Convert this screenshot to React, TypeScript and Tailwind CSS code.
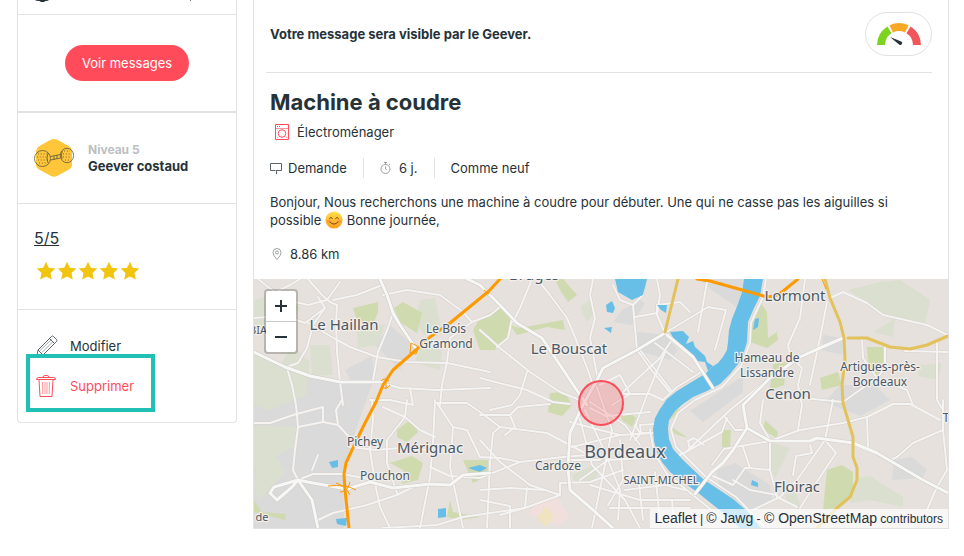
import type { ReactNode } from "react";

const STAR = "M10 .8l2.8 6 6.5.8-4.8 4.5 1.3 6.5L10 15.4l-5.8 3.2 1.3-6.5L.7 7.6l6.5-.8z";

function LevelBadge() {
  return (
    <svg viewBox="0 0 40 40" className="size-10 shrink-0" fill="none" aria-hidden="true">
      <path
        d="M17 1.6q3-1.4 6 0l12 6.6q3 1.8 3 5v13.400q0 3.400-3 5l-12 6.400q-3 1.600-6 0l-12-6.400q-3-1.600-3-5V13.200q0-3.200 3-5z"
        fill="#ffc639"
      />
      <g stroke="#5c563c" strokeWidth=".8">
        <ellipse cx="8.500" cy="20.500" rx="8" ry="8" />
        <ellipse cx="33" cy="17.500" rx="6.600" ry="7.200" />
        <path d="M16.500 18.500l10-2M16.500 22l10-2M20 18v4M23 17v4M14 15q-2 5 0 10M28 13q-1 4 0 8" />
        <path
          d="M4 16h9M3 19h11M4 22h10M5 25h8M30 13h6M29 16h8M29 19h8M31 22h5"
          strokeDasharray="1 1.800"
        />
      </g>
    </svg>
  );
}

function Gauge() {
  return (
    <svg viewBox="0 0 44 23" className="h-[23px] w-11" role="img" aria-label="État">
      <g fill="none" strokeWidth="8">
        <path d="M4 22A18 18 0 0 1 12.500 6.800" stroke="#7ed321" />
        <path d="M14.200 5.900A18 18 0 0 1 29.800 5.900" stroke="#f9a825" />
        <path d="M31.500 6.800A18 18 0 0 1 40 22" stroke="#f0565b" />
      </g>
      <path d="M13 14l11.200 4.500a1.800 1.800 0 0 1-1.800 3.200z" fill="#263238" />
    </svg>
  );
}

function PencilIcon() {
  return (
    <svg viewBox="0 0 22 22" className="size-[22px]" fill="none" stroke="#4a5357" aria-hidden="true">
      <path d="M1 21l1-6L15.500 1.500q1-1 2 0l3 3q1 1 0 2L7 20zM13.500 3.500l5 5M2 15l5 5" strokeWidth=".9" />
      <path d="M4 15.500L15.500 4.500M6 17.500L17 6.500" strokeWidth=".5" />
    </svg>
  );
}

function TrashIcon() {
  return (
    <svg viewBox="0 0 20 22" className="h-[22px] w-5" fill="none" stroke="#ff4d5b" aria-hidden="true">
      <path d="M.5 4.500q0-2 2-2h15q2 0 2 2zM7 2.500q0-2 2-2h2q2 0 2 2M3 4.500l1 17h12l1-17" />
      <path d="M6.500 7l.3 12M9 7v12M11 7v12M13.500 7l-.3 12" strokeWidth=".6" />
    </svg>
  );
}

function WasherIcon() {
  return (
    <svg viewBox="0 0 14 16" className="h-4 w-3.5" fill="none" stroke="#ff4d5b" aria-hidden="true">
      <path d="M.5.5h13v15H.5zM2 2.500h1M4 2.500h1" />
      <path d="M.5 4.500h13M11 13.500h1M2 13.500h1" strokeWidth=".6" />
      <circle cx="7" cy="9.500" r="3.800" />
    </svg>
  );
}

function SignIcon() {
  return (
    <svg viewBox="0 0 12 11" className="h-[11px] w-3" fill="none" stroke="#5b6468" aria-hidden="true">
      <path d="M5.500 7.500h-5v-7h11v7h-5M6.500 7v4" />
    </svg>
  );
}

function TimerIcon() {
  return (
    <svg viewBox="0 0 11 12" className="h-3 w-[11px]" fill="none" stroke="#838a8d" strokeWidth=".8" aria-hidden="true">
      <circle cx="5.500" cy="7" r="4.500" />
      <path d="M4 .5h3M5.500.5v2M9 2l1 1M5.500 4.500V7l1.500 1" />
    </svg>
  );
}

function PinIcon() {
  return (
    <svg viewBox="0 0 10 12" className="h-3 w-2.5" fill="none" stroke="#838a8d" strokeWidth=".8" aria-hidden="true">
      <path d="M5 11.500Q1 7.500 1 4.500a4 4 0 0 1 8 0Q9 7.500 5 11.500z" />
      <circle cx="5" cy="4.500" r="1.500" />
    </svg>
  );
}

function Smiley() {
  return (
    <svg viewBox="0 0 18 18" className="inline-block size-[18px] align-[-4px]" role="img" aria-label="sourire">
      <defs>
        <linearGradient id="face" x2="0" y2="1">
          <stop offset="0" stopColor="#ffe04d" />
          <stop offset="1" stopColor="#f99b1c" />
        </linearGradient>
      </defs>
      <circle cx="9" cy="9" r="8.600" fill="url(#face)" />
      <ellipse cx="3.800" cy="10.500" rx="2.200" ry="1.800" fill="#fb7b3b" opacity=".5" />
      <ellipse cx="14.200" cy="10.500" rx="2.200" ry="1.800" fill="#fb7b3b" opacity=".5" />
      <path
        d="M4.500 7.500Q6 5 7.500 7.500M10.500 7.500Q12 5 13.500 7.500M5 11q4 4.500 8 0"
        fill="none"
        stroke="#7a4310"
        strokeLinecap="round"
      />
    </svg>
  );
}

const urban = [
  "254,390 287,368 340,383 372,384 362,412 352,442 343,470 344,528 254,528",
  "390,325 415,347 400,370 375,345",
  "345,370 372,356 375,380 350,380",
  "640,300 645,303 632,325 613,322 622,310",
  "638,332 665,335 678,350 670,360 635,350",
  "690,411 743,376 743,392 703,422",
  "700,279 744,279 738,308 712,290",
  "823,335 843,338 842,355 822,350",
  "840,385 875,385 890,400 860,416 825,402",
  "894,460 912,457 927,470 922,478 892,480",
  "716,470 735,463 770,485 772,500 750,512 720,488",
];

const paleGreens = [
  "254,300 284,292 300,308 290,325 254,330",
  "356,325 385,325 378,345 358,348",
  "420,300 435,298 440,325 424,335 415,322",
  "420,345 442,350 440,370 415,363",
  "254,350 280,366 292,345 310,362 306,395 270,410 254,405",
  "310,345 330,345 333,375 312,376",
  "254,425 296,427 296,445 254,470",
  "258,455 270,447 285,472 260,500 254,490",
  "580,307 592,298 595,312 587,322",
  "572,475 595,464 598,475 590,482 574,482",
  "848,290 880,282 900,280 930,300 925,324 885,314",
  "885,325 895,317 893,337 873,332",
  "920,365 942,363 938,380 918,376",
  "857,478 870,476 903,497 903,507 870,500 850,503",
  "771,442 790,448 775,478 770,465",
  "785,495 795,490 802,510 788,505",
];

const greens = [
  "353,308 378,302 378,312 373,325 358,323",
  "394,308 403,302 422,313 417,333 400,322",
  "473,330 480,318 500,307 510,315 510,335 495,350 480,350",
  "510,325 520,328 563,320 565,330 547,327 517,335",
  "555,279 563,279 577,295 568,302 560,290",
  "550,393 565,392 572,405 562,416 548,412",
  "621,416 630,413 636,418 632,427 622,420",
  "397,430 410,420 418,432 407,442 397,437",
  "390,463 412,456 423,463 418,480 402,484 403,470",
  "463,460 488,460 488,475 473,483",
  "450,500 453,512 480,517 460,520 447,517",
  "760,302 767,312 768,338 777,332 778,340 767,348 750,342 753,315",
  "773,364 787,362 784,385 770,390",
  "820,378 838,372 842,385 822,390",
  "867,347 883,347 883,372 875,377 868,362",
  "827,470 842,465 853,472 853,497 837,508 823,510",
  "765,420 778,432 777,438 763,430",
  "722,430 731,430 730,447 722,447",
  "670,426 688,438 675,434",
  "668,422 675,410 683,409 672,418",
  "254,500 262,512 286,514 285,520 254,512",
];

const water = [
  "744,279 763,279 760,296 754,308 748,322 747,342 743,355 738,364 730,374 720,384 707,391 693,397 683,404 675,411 669,420 668,429 669,439 673,449 682,459 703,479 718,489 733,499 747,511 761,528 740,528 727,516 697,492 683,482 670,472 662,462 657,452 654,441 653,429 655,418 660,409 667,399 677,391 690,383 705,374 712,367 718,363 723,357 727,350 728,342 729,330 732,319 738,304 742,292",
  "670,332 683,331 689,337 686,344 693,341 695,347 705,356 707,362 713,366 708,371 705,362 697,361 687,352 683,346 675,341",
  "615,279 618,292 632,300 643,295 647,279",
  "606,305 612,301 615,308 613,313 607,312",
  "604,328 612,327 611,333",
  "657,305 667,305 666,313 661,310",
  "329,462 338,460 338,467 332,468",
  "336,519 347,518 346,526 337,524",
  "438,509 446,508 446,517 438,518",
  "468,468 480,465 487,468 480,472",
  "753,330 755,319 759,318 758,327",
  "751,485 752,480 758,483 758,487",
];

const minorRoads = [
  "258,279 268,287 287,300 308,305 327,300 340,282",
  "308,279 322,295 330,302 337,305 336,322 337,352 340,382 343,405",
  "254,318 285,316 305,323 325,308",
  "270,295 290,285 300,279",
  "333,300 357,295 382,285",
  "308,323 337,340 350,347 377,357 407,362 447,363 490,372",
  "318,297 325,308 313,325 307,348 298,363 287,367",
  "393,313 388,328 378,352 373,380",
  "383,295 407,290 440,295 463,312 472,322 490,315 500,307",
  "472,322 450,338 447,362 442,385 440,405",
  "382,383 400,388 437,390 490,388",
  "410,388 413,405 390,400 370,400",
  "287,368 292,385 296,405 298,427 295,450 293,470 298,480",
  "254,423 270,423 293,415 323,407 323,422 298,427",
  "323,422 338,425 350,438",
  "338,425 336,410 342,400",
  "312,470 318,455",
  "298,480 313,474 343,474 373,480",
  "318,520 333,513 367,505 397,495 417,485",
  "372,400 373,420 370,450 375,483 380,507 390,528",
  "383,407 405,417 420,430 435,437",
  "407,400 405,417 387,440 387,463 397,493",
  "350,447 375,450 400,448 430,450",
  "435,400 433,443 430,477 420,528",
  "435,403 467,403 480,412 500,427 493,433 490,463 487,528",
  "437,403 453,427 467,430 480,457 500,458 520,462",
  "453,427 450,467 463,528",
  "430,467 450,476 480,478 520,462 563,457 600,454",
  "383,528 437,525 463,517 490,513 525,508 560,495 560,483 590,482 623,470",
  "480,330 500,348 530,372 560,392 580,400",
  "480,378 527,390 553,402 570,404",
  "527,372 520,395 512,405 490,410",
  "512,318 508,338 497,347",
  "532,279 520,308 513,322",
  "537,279 550,295 567,318 577,342 587,368 593,385",
  "593,279 590,295 595,318 590,338 597,375",
  "613,285 620,300 633,305 643,295 645,279",
  "633,305 635,328 637,350 653,372 670,392",
  "657,279 660,295 657,315 665,333",
  "635,317 657,313 657,305 680,302 690,312",
  "665,333 708,307 726,310 715,350",
  "707,282 698,332",
  "500,427 547,433 585,453",
  "480,415 510,415 518,407 550,404",
  "510,415 515,427 505,435",
  "480,440 500,462 530,485 545,490",
  "480,490 510,488 545,490 560,495",
  "527,488 525,508 500,515",
  "480,500 510,506 510,528",
  "623,392 660,358 673,338",
  "630,440 647,395 665,352",
  "655,343 693,372",
  "640,350 671,390",
  "623,394 650,394 663,400",
  "600,385 620,375 630,394 612,405",
  "590,402 625,425 640,445",
  "595,382 612,430 606,460 592,528",
  "590,408 606,416 650,412",
  "568,448 620,435 655,433",
  "635,425 640,433 653,433",
  "635,440 641,433 640,425 655,424",
  "585,410 604,450 620,490 618,520",
  "570,422 600,430 620,435",
  "578,412 592,465 625,500 640,528",
  "620,440 623,480 608,505",
  "580,480 608,460 650,458",
  "590,485 640,500 690,500",
  "625,490 665,485 685,490",
  "638,475 643,520",
  "655,472 660,520",
  "610,508 690,508",
  "672,500 674,528",
  "568,460 600,460",
  "688,450 730,410 770,378",
  "690,450 688,441 694,438 704,445",
  "680,455 700,444 722,432 727,418",
  "725,417 735,430 747,430",
  "663,400 677,387 703,371",
  "712,465 724,449 770,441",
  "743,447 750,468 770,470",
  "713,476 733,485 745,468 750,468",
  "733,480 750,490 777,495",
  "830,298 843,292 867,303 883,315 927,325 948,335",
  "805,279 800,318 788,345 790,355 802,368 798,385 802,405 798,430",
  "827,302 820,338 810,385",
  "763,400 760,423 770,440 770,470 777,497 797,507",
  "833,400 825,440 797,480 780,497 753,510",
  "825,440 836,453 818,480 800,508",
  "810,445 812,453 796,456 793,475",
  "770,441 800,430 843,423 867,417 893,404 910,404 940,420",
  "867,417 868,447",
  "943,400 943,430 913,443 897,457 890,460",
  "943,430 947,470 937,487 927,510",
  "862,338 863,358 877,378 907,390 913,405",
  "885,347 885,368 877,378 857,392 843,402 803,398",
  "937,340 937,400 943,410",
  "905,351 948,352",
];

// quays along both banks of the Garonne
const quays = [
  "766,279 763,297 751,323 750,343 741,366 722,387 695,400 678,413 671,429 676,447 706,477 736,497 764,526",
  "650,429 654,453 667,474 694,496 724,520",
];

const majorRoads = [
  "380,279 387,295 393,313 400,325 415,347",
  "254,352 285,367 310,376 340,382 382,382",
  "467,279 480,285 500,305 517,323 542,338 560,365 580,395 587,405",
  "665,333 637,350 603,368 597,380 583,405 570,433 568,467 570,490 593,510 613,528",
  "667,335 693,357 713,388",
  "298,480 274,487 270,493 277,500 292,487 298,480 312,500 318,528",
  "298,480 313,483 347,489 370,482 393,488 430,484 450,485 463,475 490,473",
  "843,338 820,348 800,357 770,378 743,405 747,428 733,450 723,463 712,472 695,494",
  "747,428 770,441 810,441 817,438 853,443 877,453 923,480 948,493",
];

const motorways = [
  "500,279 489,291 450,323 430,337 416,350 393,370 383,385 376,402 363,427 352,450 346,463 344,474 345,490 349,528",
  "697,279 710,281 767,297 775,296 782,292 798,279",
];

const trunks = [
  "678,279 665,332",
  "825,279 830,298 840,322 844,338 845,360 842,385 843,403 853,437 853,457 857,468 857,480 850,497 837,508 817,528",
  "848,338 867,338 890,347 910,349 927,345 948,336",
];

const places = [
  { name: "Bruges", x: 534, y: 280, size: 15 },
  { name: "Le Haillan", x: 344, y: 330, size: 15 },
  { name: "Le Bois", x: 446, y: 333, size: 12 },
  { name: "Gramond", x: 446, y: 348, size: 12 },
  { name: "BIA", x: 258, y: 334, size: 11 },
  { name: "Le Bouscat", x: 569, y: 354, size: 15 },
  { name: "Mérignac", x: 430, y: 453, size: 15 },
  { name: "Pichey", x: 365, y: 446, size: 12 },
  { name: "Pouchon", x: 385, y: 480, size: 12 },
  { name: "Cardoze", x: 558, y: 470, size: 12 },
  { name: "Bordeaux", x: 625, y: 458, size: 18 },
  { name: "SAINT-MICHEL", x: 661, y: 484, size: 11 },
  { name: "Lormont", x: 795, y: 301, size: 15 },
  { name: "Hameau de", x: 767, y: 362, size: 12 },
  { name: "Lissandre", x: 767, y: 377, size: 12 },
  { name: "Cenon", x: 788, y: 399, size: 15 },
  { name: "Artigues-près-", x: 880, y: 371, size: 12 },
  { name: "Bordeaux", x: 880, y: 386, size: 12 },
  { name: "Floirac", x: 797, y: 492, size: 15 },
  { name: "T", x: 946, y: 422, size: 12 },
  { name: "de", x: 262, y: 521, size: 11 },
];

function Lines({ lines, stroke, width }: { lines: string[]; stroke: string; width: number }) {
  return (
    <g fill="none" stroke={stroke} strokeWidth={width} strokeLinejoin="round" strokeLinecap="round">
      {lines.map((points) => (
        <polyline key={points} points={points} />
      ))}
    </g>
  );
}

function Areas({ areas, fill }: { areas: string[]; fill: string }) {
  return (
    <g fill={fill}>
      {areas.map((points) => (
        <polygon key={points} points={points} />
      ))}
    </g>
  );
}

function CityMap() {
  return (
    <svg
      viewBox="254 279 694 249"
      preserveAspectRatio="xMidYMid slice"
      className="block h-full w-full"
      role="img"
      aria-label="Carte de Bordeaux"
    >
      <rect x="254" y="279" width="694" height="249" fill="#e6e1dc" />
      <Areas areas={urban} fill="#dadada" />
      <Areas areas={paleGreens} fill="#dbdfcf" />
      <Areas areas={greens} fill="#cfdaae" />
      <polygon points="528,513 540,500 557,497 570,517 560,525 543,520" fill="#f0dfdc" />
      <polygon points="537,517 547,506 554,516 546,527" fill="#f0e4c0" />
      <Lines lines={minorRoads} stroke="#d6d1cd" width={3} />
      <Lines lines={quays} stroke="#d6d1cd" width={3} />
      <Lines lines={minorRoads} stroke="#f5f4f3" width={2} />
      <Lines lines={quays} stroke="#f5f4f3" width={2} />
      <Areas areas={water} fill="#67bee7" />
      <Lines lines={majorRoads} stroke="#cfcbc7" width={4} />
      <Lines lines={majorRoads} stroke="#f7f7f6" width={3} />
      <Lines lines={trunks} stroke="#e3c25c" width={3} />
      <Lines lines={motorways} stroke="#ff9900" width={3} />
      <g fill="none" stroke="#ff9900">
        <path d="M411 343l8 4-3 7-6-1zM381 381q3-4 8 0M382 387q5 3 8-2M386 378v11M328 486q18-2 28 4M336 483q10 3 14 12M340 492q8 0 10-10M822 279l4 10M484 290l5 4" />
      </g>
      <g
        fill="#4a5864"
        stroke="#f1eeeb"
        strokeWidth="2.500"
        strokeLinejoin="round"
        paintOrder="stroke"
        textAnchor="middle"
        className="font-['Noto_Sans','Open_Sans',sans-serif]"
      >
        {places.map((place) => (
          <text key={`${place.name}-${place.y}`} x={place.x} y={place.y} fontSize={place.size}>
            {place.name}
          </text>
        ))}
      </g>
      <circle cx="601" cy="403" r="22" fill="#ff4d5b" fillOpacity=".22" stroke="#ff4d5b" strokeWidth="2" />
    </svg>
  );
}

function SideSection({ children, className }: { children: ReactNode; className: string }) {
  return <section className={`border-t border-[#e2e2e2] px-4 ${className}`}>{children}</section>;
}

function Sidebar() {
  return (
    <aside className="w-[220px] shrink-0 rounded-b border-x border-b border-[#e2e2e2]">
      <div className="flex h-3.5 items-start justify-between pr-11 pl-4">
        <svg viewBox="0 0 16 3" className="h-[3px] w-4" aria-hidden="true">
          <path d="M1 0h14q-1 1-3 1H5Q2 1 1 0zM4 0h9l-3 2H7z" fill="#263238" />
        </svg>
        <svg viewBox="0 0 3 2" className="h-0.5 w-[3px]" aria-hidden="true">
          <path d="M1 0h1v1H1z" fill="#737b7f" />
        </svg>
      </div>
      <SideSection className="flex justify-center py-[30px]">
        <button type="button" className="h-9 rounded-full bg-[#ff4b5a] px-[17px] text-white">
          Voir messages
        </button>
      </SideSection>
      <SideSection className="flex items-center gap-3.5 border-t-2 py-[25px]">
        <LevelBadge />
        <div className="font-bold">
          <p className="text-xs leading-4 text-[#bbbfc1]">Niveau 5</p>
          <p className="leading-4">Geever costaud</p>
        </div>
      </SideSection>
      <SideSection className="pt-6 pb-7">
        <a href="#avis" className="text-base leading-5 underline">
          5/5
        </a>
        <div className="mt-3 flex gap-px pl-0.5" role="img" aria-label="5 étoiles sur 5">
          {[1, 2, 3, 4, 5].map((n) => (
            <svg key={n} viewBox="0 0 20 20" className="size-5">
              <path d={STAR} fill="#f1c40f" />
            </svg>
          ))}
        </div>
      </SideSection>
      <SideSection className="relative py-4">
        <button type="button" className="flex h-10 items-center gap-3 pl-0.5">
          <PencilIcon />
          Modifier
        </button>
        <button type="button" className="flex h-10 items-center gap-3.5 pl-0.5 text-[#ff4b5a]">
          <TrashIcon />
          Supprimer
        </button>
        <div className="pointer-events-none absolute bottom-2.5 left-2 h-[58px] w-[129px] border-4 border-[#20c0b5]" />
      </SideSection>
    </aside>
  );
}

function Attribution() {
  return (
    <div className="absolute right-0 bottom-0 bg-white/70 px-[5px] font-['Liberation_Sans',Arial,sans-serif] text-xs leading-[18px]">
      <a href="#leaflet" className="text-sm leading-[18px]">Leaflet</a> |{" "}
      <a href="#jawg" className="text-sm leading-[18px]">© Jawg</a> -{" "}
      <a href="#osm" className="text-sm leading-[18px]">© OpenStreetMap</a> contributors
    </div>
  );
}

export default function App() {
  return (
    <div className="flex min-h-screen items-start gap-4 bg-white pr-[15px] pl-[17px] font-['Inter',sans-serif] text-[13px] leading-5 text-[#263238]">
      <Sidebar />
      <main className="min-w-0 flex-1 border-x border-b border-[#e2e2e2]">
        <header className="mr-4 ml-3 flex items-center justify-between border-b border-[#e2e2e2] pt-3 pb-4 pl-1">
          <p className="font-bold">Votre message sera visible par le Geever.</p>
          <div className="flex h-11 w-[67px] items-center justify-center rounded-full border border-[#e2e2e2]">
            <Gauge />
          </div>
        </header>
        <div className="px-4 pt-[13px] pb-[15px]">
          <h1 className="text-[22px] leading-8 font-bold">Machine à coudre</h1>
          <p className="mt-1 flex h-5 items-center gap-2 pl-[5px]">
            <WasherIcon />
            Électroménager
          </p>
          <div className="mt-4 flex h-5 items-center">
            <span className="flex items-center gap-1.5 pr-4">
              <SignIcon />
              Demande
            </span>
            <span className="flex items-center gap-2 border-x border-[#e2e2e2] px-4">
              <TimerIcon />6 j.
            </span>
            <span className="pl-4">Comme neuf</span>
          </div>
          <p className="mt-[15px] max-w-[640px] leading-[18px]">
            Bonjour, Nous recherchons une machine à coudre pour débuter. Une qui ne casse pas les aiguilles si
            possible <Smiley /> Bonne journée,
          </p>
          <p className="mt-[15px] flex h-5 items-center gap-2 pl-0.5">
            <PinIcon />
            8.86 km
          </p>
        </div>
        <div className="relative h-[249px] overflow-hidden">
          <CityMap />
          <div className="absolute top-2.5 left-2.5 w-[34px] overflow-hidden rounded border-2 border-black/20 bg-white bg-clip-padding">
            <button type="button" aria-label="Zoom avant" className="flex h-[31px] w-full items-center justify-center border-b border-[#ccc]">
              <svg viewBox="0 0 12 12" className="size-3" stroke="#263238" strokeWidth="2">
                <path d="M0 6h12M6 0v12" />
              </svg>
            </button>
            <button type="button" aria-label="Zoom arrière" className="flex h-[30px] w-full items-center justify-center">
              <svg viewBox="0 0 12 12" className="size-3" stroke="#263238" strokeWidth="2">
                <path d="M0 6h12" />
              </svg>
            </button>
          </div>
          <Attribution />
        </div>
      </main>
    </div>
  );
}
